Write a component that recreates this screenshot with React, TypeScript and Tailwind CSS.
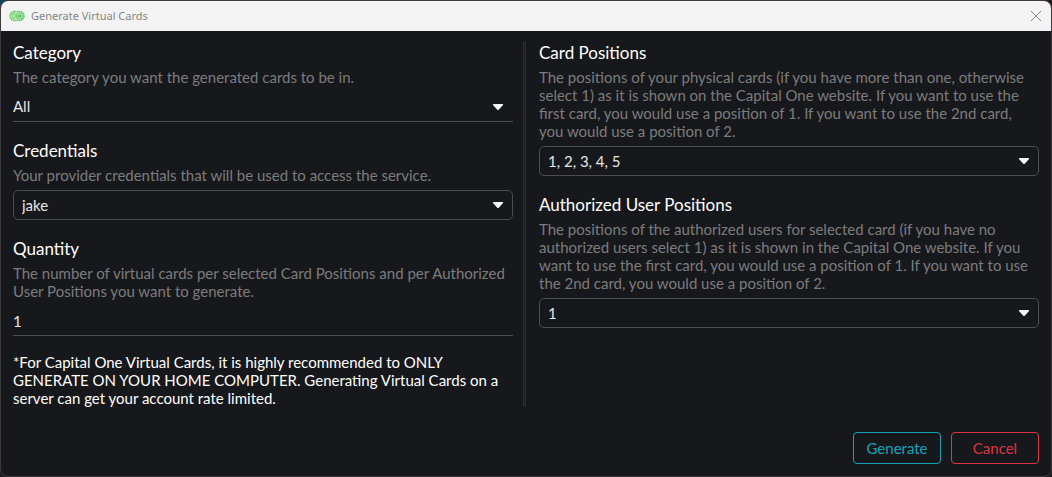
import { useId, useState, type ReactNode } from 'react';

type FieldProps = {
  id: string;
  label: string;
  hint: ReactNode;
  children: ReactNode;
};

function Field({ id, label, hint, children }: FieldProps) {
  return (
    <div className="flex flex-col">
      <label htmlFor={id} className="text-[17px] leading-6 text-white">
        {label}
      </label>
      <p id={`${id}-hint`} className="mt-[3px] mb-[6px] text-[15px] leading-[18px] text-[#7c7c7c]">
        {hint}
      </p>
      {children}
    </div>
  );
}

type SelectFieldProps = {
  label: string;
  hint: ReactNode;
  options: string[];
  underlined?: boolean;
};

function SelectField({ label, hint, options, underlined = false }: SelectFieldProps) {
  const id = useId();
  const [value, setValue] = useState(options[0]);
  return (
    <Field id={id} label={label} hint={hint}>
      <div className="relative">
        <select
          id={id}
          aria-describedby={`${id}-hint`}
          value={value}
          onChange={(e) => setValue(e.target.value)}
          className={
            underlined
              ? 'block h-[30px] w-full appearance-none border-b border-[#4c4d50] bg-[#17181c] pr-8 text-[15px] text-[#e6e6e6] outline-none'
              : 'block h-[30px] w-full appearance-none rounded-[5px] border border-[#4c4d50] bg-[#17181c] pr-8 pl-2 text-[15px] text-[#e6e6e6] outline-none'
          }
        >
          {options.map((option) => (
            <option key={option}>{option}</option>
          ))}
        </select>
        <svg
          aria-hidden="true"
          viewBox="0 0 10 6"
          className="pointer-events-none absolute top-3 right-[10px] h-[6px] w-[10px] fill-white"
        >
          <path d="M0 0H10V1L5.5 6H4.5L0 1Z" />
        </svg>
      </div>
    </Field>
  );
}

function QuantityField() {
  const id = useId();
  const [value, setValue] = useState('1');
  return (
    <Field
      id={id}
      label="Quantity"
      hint={
        <>
          The number of virtual cards per selected Card Positions and per Authorized
          <br />
          User Positions you want to generate.
        </>
      }
    >
      <input
        id={id}
        aria-describedby={`${id}-hint`}
        type="text"
        inputMode="numeric"
        value={value}
        onChange={(e) => setValue(e.target.value)}
        className="h-[30px] w-full border-b border-[#4c4d50] bg-transparent text-[15px] text-[#e6e6e6] outline-none"
      />
    </Field>
  );
}

function AppIcon() {
  return (
    <svg aria-hidden="true" viewBox="0 0 16 12" className="h-3 w-4" fill="none" stroke="#6fcf6f">
      <rect x="1" y="1.5" width="14" height="9" rx="4.5" fill="#c9ecc9" strokeWidth="1.6" strokeDasharray="1.6 .4" />
      <circle cx="10.5" cy="6" r="3" strokeWidth="1.1" />
      <circle cx="10.5" cy="6" r="1.6" fill="#4fc04f" stroke="none" />
      <path d="M6 3.5C4.5 3.2 3.2 4.3 3.2 6S4.5 8.8 6 8.5M5 6H7M7 4V8" strokeWidth="1.1" />
    </svg>
  );
}

export default function App() {
  return (
    <div className="min-h-screen bg-[#1d1b1e] bg-[radial-gradient(circle_at_0_0,#124561_0,#124561_20px,#1d1b1e_30px)] font-['Lato','Noto_Sans',sans-serif]">
      <main className="flex min-h-screen flex-col overflow-hidden rounded-[8px] border border-[#3c3a3c] bg-[#17181c]">
        <header className="flex h-[30px] items-center bg-[#f3f3f3] pr-[9px] pl-2">
          <AppIcon />
          <h1 className="ml-[6px] font-['Noto_Sans',sans-serif] text-[11px] text-[#858585]">
            Generate Virtual Cards
          </h1>
          <button type="button" aria-label="Close" className="ml-auto">
            <svg viewBox="0 0 12 12" className="size-3" stroke="#858585" strokeWidth="1" fill="none">
              <path d="M1 1L11 11M11 1L1 11" />
            </svg>
          </button>
        </header>

        <form className="flex flex-1 flex-col px-3 pt-[10px] pb-3" onSubmit={(e) => e.preventDefault()}>
          <div className="grid grid-cols-[minmax(0,1fr)_26px_minmax(0,1fr)]">
            <section className="flex flex-col gap-[17px]">
              <SelectField
                label="Category"
                hint="The category you want the generated cards to be in."
                options={['All']}
                underlined
              />
              <SelectField
                label="Credentials"
                hint="Your provider credentials that will be used to access the service."
                options={['jake']}
              />
              <QuantityField />
              <p className="text-[15px] leading-[18px] text-white">
                *For Capital One Virtual Cards, it is highly recommended to ONLY
                <br />
                GENERATE ON YOUR HOME COMPUTER. Generating Virtual Cards on a
                <br />
                server can get your account rate limited.
              </p>
            </section>

            <div className="ml-[10px] w-[3px] border-x border-[#2b2c2f] bg-[#202125]" />

            <section className="flex flex-col gap-[17px]">
              <SelectField
                label="Card Positions"
                hint={
                  <>
                    The positions of your physical cards (if you have more than one, otherwise
                    <br />
                    select 1) as it is shown on the Capital One website. If you want to use the
                    <br />
                    first card, you would use a position of 1. If you want to use the 2nd card,
                    <br />
                    you would use a position of 2.
                  </>
                }
                options={['1, 2, 3, 4, 5']}
              />
              <SelectField
                label="Authorized User Positions"
                hint={
                  <>
                    The positions of the authorized users for selected card (if you have no
                    <br />
                    authorized users select 1) as it is shown in the Capital One website. If you
                    <br />
                    want to use the first card, you would use a position of 1. If you want to use
                    <br />
                    the 2nd card, you would use a position of 2.
                  </>
                }
                options={['1']}
              />
            </section>
          </div>

          <div className="mt-auto flex justify-end gap-[10px]">
            <button
              type="submit"
              className="h-8 w-[88px] rounded-[4px] border border-[#17a2b8] text-[15px] text-[#17a2b8]"
            >
              Generate
            </button>
            <button
              type="button"
              className="h-8 w-[88px] rounded-[4px] border border-[#dc3545] text-[15px] text-[#dc3545]"
            >
              Cancel
            </button>
          </div>
        </form>
      </main>
    </div>
  );
}
